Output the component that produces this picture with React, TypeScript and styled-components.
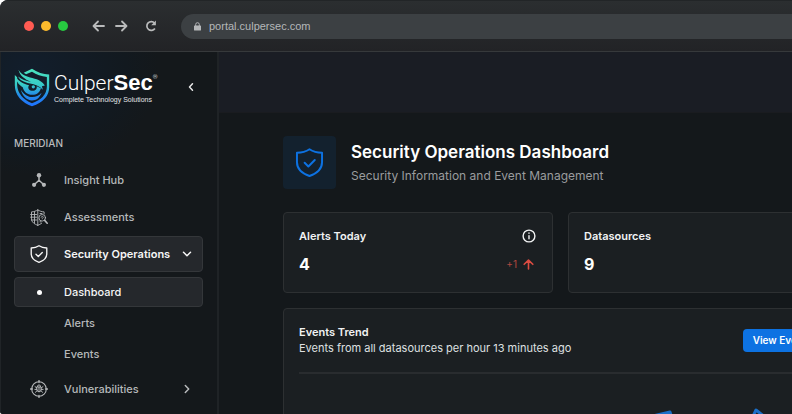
import React from "react";
import styled, { createGlobalStyle } from "styled-components";

const GlobalStyle = createGlobalStyle`
  *, *::before, *::after { box-sizing: border-box; }
  html, body, #root { height: 100%; }
  body {
    margin: 0;
    background: #ffffff;
    font-family: Inter, "Liberation Sans", sans-serif;
    color: #f1f2f3;
    overflow: hidden;
  }
  button { font: inherit; color: inherit; border: 0; background: none; padding: 0; cursor: pointer; }
  h1, h2, p, ul { margin: 0; padding: 0; }
  ul { list-style: none; }
  svg { display: block; flex: none; }
`;

const BrowserWindow = styled.div`
  display: flex;
  flex-direction: column;
  height: 100vh;
  overflow: hidden;
  border-radius: 8px 0 0 3px;
  background: #15191c;
`;

const BrowserBar = styled.header`
  display: flex;
  align-items: center;
  flex: none;
  height: 52px;
  padding-left: 24px;
  background: linear-gradient(#2b2e30, #222326);
  border-top: 1px solid #222527;
  border-bottom: 1px solid #36393b;
`;

const TrafficLights = styled.div`
  display: flex;
  gap: 7px;
  margin-right: 24px;
`;

const Light = styled.span<{ $color: string }>`
  width: 10px;
  height: 10px;
  border-radius: 50%;
  background: ${(p) => p.$color};
`;

const NavButtons = styled.div`
  display: flex;
  gap: 10px;
  margin-right: 17px;
  color: #b9babb;
`;

const IconButton = styled.button`
  display: flex;
`;

const AddressBar = styled.label`
  display: flex;
  align-items: center;
  flex: 1;
  gap: 8px;
  height: 25px;
  margin-left: 7px;
  padding-left: 13px;
  border-radius: 13px 0 0 13px;
  background: #3c4043;
  color: #b5b7b9;
`;

const AddressInput = styled.input`
  flex: 1;
  min-width: 0;
  padding: 0;
  border: 0;
  outline: 0;
  background: transparent;
  color: #b5b7b9;
  font: 11px "Liberation Sans", Arial, sans-serif;
`;

const Page = styled.div`
  display: flex;
  flex: 1;
  min-height: 0;
  border-left: 1px solid #202427;
`;

const Sidebar = styled.aside`
  flex: none;
  width: 218px;
  padding: 15px 14px 0 13px;
  border-right: 2px solid #1f2326;
  background: radial-gradient(ellipse 130px 105px at 28px 18px, #121e2c, #12191f 75%, #14181b 100%);
`;

const SidebarHead = styled.div`
  display: flex;
  align-items: center;
  height: 40px;
  margin-bottom: 28px;
`;

const Brand = styled.div`
  display: flex;
  flex-direction: column;
  flex: 1;
  margin-left: 4px;
  white-space: nowrap;
`;

const BrandName = styled.div`
  font: 300 21px/24px Roboto, "Liberation Sans", sans-serif;
  color: #ffffff;

  b { font: 700 22px/24px "Liberation Sans", Arial, sans-serif; }
  sup { font-size: 6px; line-height: 6px; vertical-align: 11px; }
`;

const Tagline = styled.div`
  font: 7px/9px "Liberation Sans", Arial, sans-serif;
  color: #e3e6e8;
`;

const CollapseButton = styled(IconButton)`
  margin-right: 6px;
  color: #e8e8e8;
`;

const GroupTitle = styled.h2`
  margin-bottom: 11px;
  font-size: 10px;
  line-height: 16px;
  font-weight: 500;
  color: #b9bbbd;
`;

const NavList = styled.ul`
  display: flex;
  flex-direction: column;
  gap: 1px;
`;

const NavItem = styled.button<{ $active?: boolean; $child?: boolean }>`
  display: flex;
  align-items: center;
  width: 100%;
  height: ${(p) => (p.$child ? 30 : 36)}px;
  padding: 0 9px 0 15px;
  border: 1px solid ${(p) => (p.$active ? "#34373a" : "transparent")};
  border-radius: 4px;
  background: ${(p) => (p.$active ? "#25282c" : "transparent")};
  color: ${(p) => (p.$active ? "#f6f6f6" : "#b6b8ba")};
  font-size: 11px;
  font-weight: ${(p) => (p.$active && !p.$child ? 600 : 500)};
  text-align: left;
`;

const NavIcon = styled.span`
  display: flex;
  justify-content: center;
  width: 18px;
  margin-right: 16px;
`;

const NavLabel = styled.span`
  flex: 1;
  white-space: nowrap;
`;

const SubList = styled(NavList)`
  margin: 5px 0 1px;
`;

const Bullet = styled.span`
  width: 5px;
  height: 5px;
  border-radius: 50%;
  background: #ffffff;
`;

const Main = styled.main`
  flex: 1;
  min-width: 0;
  overflow: hidden;
  background: #14181b;
`;

const TopBanner = styled.div`
  height: 61px;
  background: #1a1d24;
  border-bottom: 1px solid #1a1c20;
`;

const Content = styled.div`
  min-width: 683px;
  padding: 23px 64px 0;
`;

const PageHeading = styled.div`
  display: flex;
  align-items: center;
  gap: 15px;
  margin-bottom: 23px;
`;

const HeadingIcon = styled.div`
  display: grid;
  place-items: center;
  width: 53px;
  height: 53px;
  border-radius: 4px;
  background: #13212e;
  color: #0d72e2;
`;

const HeadingText = styled.div`
  padding-top: 3px;
`;

const Title = styled.h1`
  font-size: 17px;
  line-height: 24px;
  font-weight: 600;
  color: #ffffff;
`;

const Subtitle = styled.p`
  font-size: 12px;
  line-height: 24px;
  color: #9a9c9e;
`;

const CardGrid = styled.div`
  display: grid;
  grid-template-columns: 1fr 1fr;
  gap: 15px;
`;

const Card = styled.section`
  padding: 15px;
  border: 1px solid #2d3032;
  border-radius: 4px;
  background: #1b1f22;
`;

const StatCard = styled(Card)`
  height: 81px;
  padding-right: 16px;
`;

const Row = styled.div`
  display: flex;
  align-items: center;
  justify-content: space-between;
`;

const CardTitle = styled.h2`
  font-size: 11px;
  line-height: 16px;
  font-weight: 600;
`;

const StatRow = styled(Row)`
  margin-top: 10px;
`;

const StatValue = styled.span`
  font-size: 16px;
  line-height: 20px;
  font-weight: 700;
  color: #ffffff;
`;

const Delta = styled.span`
  display: flex;
  align-items: center;
  gap: 6px;
  padding-right: 2px;
  font-size: 10px;
  color: #b04840;
`;

const TrendCard = styled(Card)`
  margin-top: 15px;
`;

const TrendText = styled.p`
  font-size: 11px;
  line-height: 16px;
  color: #dfe0e1;
`;

const TrendHead = styled(Row)`
  padding-bottom: 16px;
  border-bottom: 2px solid #292c2f;
`;

const PrimaryButton = styled.button`
  height: 23px;
  padding: 0 10px;
  border-radius: 4px;
  background: #0d72e2;
  color: #ffffff;
  font-size: 10px;
  font-weight: 600;
  white-space: nowrap;
`;

const Chart = styled.svg`
  width: 100%;
  height: 120px;
  margin-top: 32px;
`;

const stroke = {
  fill: "none",
  stroke: "currentColor",
  strokeLinecap: "round" as const,
  strokeLinejoin: "round" as const,
};

const BackIcon = () => (
  <svg width="13" height="14" viewBox="0 0 13 14" {...stroke} strokeWidth="1.8"><path d="M12 7H2M6 2.5 1.5 7 6 11.5" /></svg>
);
const ForwardIcon = () => (
  <svg width="13" height="14" viewBox="0 0 13 14" {...stroke} strokeWidth="1.8"><path d="M1 7h10M7 2.5 11.5 7 7 11.5" /></svg>
);
const ReloadIcon = () => (
  <svg width="12" height="14" viewBox="0 0 12 14" {...stroke} strokeLinecap="butt" strokeWidth="1.7">
    <path d="M9.9 9.5A4.4 4.4 0 1 1 9.6 4.1" />
    <path d="M10.9 1.5v4.7H6.2z" fill="currentColor" stroke="none" />
  </svg>
);
const LockIcon = () => (
  <svg width="7" height="9" viewBox="0 0 7 9">
    <rect y="3.4" width="7" height="5.2" rx=".7" fill="currentColor" />
    <path d="M1.7 4V2.5a1.8 1.8 0 0 1 3.6 0V4" fill="none" stroke="currentColor" strokeWidth="1" />
  </svg>
);
const Chevron = ({ d }: { d: string }) => (
  <svg width="12" height="12" viewBox="0 0 12 12" {...stroke} strokeWidth="1.5"><path d={d} /></svg>
);
const ShieldCheck = ({ size, width }: { size: number; width: number }) => (
  <svg width={size} height={size} viewBox="0 0 28 28" {...stroke} strokeWidth={width}>
    <path d="M14 1.2C10.8 3.3 6.6 4.5 1.9 4.6v9.2c0 6.2 4.4 10.6 12.1 13.2 7.7-2.6 12.1-7 12.1-13.2V4.6C21.4 4.5 17.2 3.3 14 1.2Z" />
    <path d="m9.3 14.3 3.6 3.6 6.2-6.3" />
  </svg>
);
const HubIcon = () => (
  <svg width="14" height="14" viewBox="0 0 14 14" fill="currentColor">
    <circle cx="7" cy="2.2" r="2.2" /><circle cx="2.1" cy="11.8" r="2.1" /><circle cx="11.9" cy="11.8" r="2.1" />
    <path d="M7 2v5.3M7 7.3l-4.6 4.2M7 7.3l4.6 4.2" {...stroke} strokeWidth="1.5" />
  </svg>
);
const AssessIcon = () => (
  <svg width="18" height="17" viewBox="0 0 18 17" {...stroke} strokeWidth=".9">
    <path d="M7.8.8v15.4M7.8 1C5.8 2 4 2.8 1.5 2.9v7c0 3.2 3 5.3 6.3 6.4M7.8 1c2 1 3.8 1.8 6.3 1.9V5M7.8 16.3c1.5-.5 2.8-1.2 3.9-2.1M.6 5.5h6M.6 8.2h6M1.5 11h5.1M4.5 2.8v11.5M10 4.5h2M10 12.8h1" />
    <circle cx="12.2" cy="8.8" r="3.3" />
    <path d="M11.2 8.2c.2-1.2 2-1.1 2 .1 0 .8-1 .7-1 1.6" />
    <path d="m14.7 11.4 2.5 2.8" strokeWidth="1.6" />
  </svg>
);
const BugTargetIcon = () => (
  <svg width="18" height="18" viewBox="0 0 18 18" {...stroke} strokeWidth="1">
    <circle cx="9" cy="9" r="7.3" strokeWidth="1.1" />
    <path d="M9 .5v2M9 15.5v2M.5 9h2M15.5 9h2" strokeWidth="1.3" />
    <path d="M7.4 6.5a1.6 1.6 0 0 1 3.2 0M6.9 7h4.2v2.7a2.1 2.1 0 0 1-4.2 0ZM9 7.2v4.5M6.8 8 5 6.6M11.2 8 13 6.6M6.8 9.4H4.9M11.2 9.4h1.9M7.1 10.7l-1.7 1.6M10.9 10.7l1.7 1.6" />
  </svg>
);
const InfoIcon = () => (
  <svg width="14" height="14" viewBox="0 0 14 14" {...stroke} strokeWidth="1.4">
    <circle cx="7" cy="7" r="5.9" /><path d="M7 6.6v3.1M7 4v.2" />
  </svg>
);
const UpIcon = () => (
  <svg width="11" height="11" viewBox="0 0 11 11" fill="none" stroke="#dc4c42" strokeWidth="1.6" strokeLinejoin="round" strokeLinecap="round">
    <path d="M5.5 10V1.3M1.2 5.3l4.3-4.2 4.3 4.2" />
  </svg>
);
const BrandMark = () => (
  <svg width="36" height="39" viewBox="41 198 108 118">
    <defs>
      <linearGradient id="mark" gradientUnits="userSpaceOnUse" x1="95" y1="202" x2="95" y2="312">
        <stop offset="0" stopColor="#4be3bd" />
        <stop offset=".42" stopColor="#37cbc7" />
        <stop offset=".7" stopColor="#248de8" />
        <stop offset="1" stopColor="#1e72ff" />
      </linearGradient>
    </defs>
    <g fill="url(#mark)">
      <path d="M70 212 95 200q24 16 52 18v38q0 39-52 58-51-20-52-64V219l7 7v23q2 38 45 56 44-16 45-50v-30q-25-3-45-16l-18 8Z" />
      <path d="M54 203c9 15 23 21 42 25 20 5 31 11 38 23l-9 2 3 11c-11-12-24-16-39-19-20-4-31-10-36-21 11 9 23 13 39 16-20-9-34-19-38-37Z" />
      <path d="M45 222c9 18 25 23 41 28-6 9 1 17 11 17 9 0 14-7 12-14l13 6c-4 14-13 20-26 20-16 0-26-10-29-23-13-8-20-18-22-34Z" />
      <path d="M61 264c10 16 22 22 35 22 11 0 20-4 28-13-7 17-16 23-29 23-16 0-28-12-34-32Z" />
      <circle cx="99" cy="255" r="5" />
    </g>
  </svg>
);

const topItems = [
  { label: "Insight Hub", icon: <HubIcon /> },
  { label: "Assessments", icon: <AssessIcon /> },
];
const subItems = ["Dashboard", "Alerts", "Events"];

export default function App() {
  return (
    <>
      <GlobalStyle />
      <BrowserWindow>
        <BrowserBar>
          <TrafficLights>
            <Light $color="#ff5b52" />
            <Light $color="#fdbb2d" />
            <Light $color="#27c840" />
          </TrafficLights>
          <NavButtons>
            <IconButton aria-label="Back"><BackIcon /></IconButton>
            <IconButton aria-label="Forward"><ForwardIcon /></IconButton>
          </NavButtons>
          <NavButtons>
            <IconButton aria-label="Reload"><ReloadIcon /></IconButton>
          </NavButtons>
          <AddressBar>
            <LockIcon />
            <AddressInput aria-label="Address" defaultValue="portal.culpersec.com" />
          </AddressBar>
        </BrowserBar>
        <Page>
          <Sidebar>
            <SidebarHead>
              <BrandMark />
              <Brand>
                <BrandName>Culper<b>Sec</b><sup>®</sup></BrandName>
                <Tagline>Complete Technology Solutions</Tagline>
              </Brand>
              <CollapseButton aria-label="Collapse menu"><Chevron d="M7.5 2.8 4.5 6l3 3.2" /></CollapseButton>
            </SidebarHead>
            <GroupTitle>MERIDIAN</GroupTitle>
            <nav>
              <NavList>
                {topItems.map((item) => (
                  <li key={item.label}>
                    <NavItem><NavIcon>{item.icon}</NavIcon><NavLabel>{item.label}</NavLabel></NavItem>
                  </li>
                ))}
                <li>
                  <NavItem $active aria-expanded="true">
                    <NavIcon><ShieldCheck size={18} width={2.1} /></NavIcon>
                    <NavLabel>Security Operations</NavLabel>
                    <Chevron d="M2.5 4.3 6 7.7l3.5-3.4" />
                  </NavItem>
                  <SubList>
                    {subItems.map((label, i) => (
                      <li key={label}>
                        <NavItem $child $active={i === 0}>
                          <NavIcon>{i === 0 && <Bullet />}</NavIcon>
                          <NavLabel>{label}</NavLabel>
                        </NavItem>
                      </li>
                    ))}
                  </SubList>
                </li>
                <li>
                  <NavItem aria-expanded="false">
                    <NavIcon><BugTargetIcon /></NavIcon>
                    <NavLabel>Vulnerabilities</NavLabel>
                    <Chevron d="M4.3 2.5 7.7 6 4.3 9.5" />
                  </NavItem>
                </li>
              </NavList>
            </nav>
          </Sidebar>
          <Main>
            <TopBanner />
            <Content>
              <PageHeading>
                <HeadingIcon><ShieldCheck size={29} width={1.9} /></HeadingIcon>
                <HeadingText>
                  <Title>Security Operations Dashboard</Title>
                  <Subtitle>Security Information and Event Management</Subtitle>
                </HeadingText>
              </PageHeading>
              <CardGrid>
                <StatCard>
                  <Row><CardTitle>Alerts Today</CardTitle><IconButton aria-label="About alerts today"><InfoIcon /></IconButton></Row>
                  <StatRow><StatValue>4</StatValue><Delta>+1 <UpIcon /></Delta></StatRow>
                </StatCard>
                <StatCard>
                  <Row><CardTitle>Datasources</CardTitle></Row>
                  <StatRow><StatValue>9</StatValue></StatRow>
                </StatCard>
              </CardGrid>
              <TrendCard>
                <TrendHead>
                  <div>
                    <CardTitle>Events Trend</CardTitle>
                    <TrendText>Events from all datasources per hour 13 minutes ago</TrendText>
                  </div>
                  <PrimaryButton>View Events</PrimaryButton>
                </TrendHead>
                <Chart viewBox="0 0 523 120" preserveAspectRatio="xMinYMin meet">
                  <path d="M300 80 345 12 371 6 392 72 430 60 457 4 490 30 523 52" fill="none" stroke="#1a6fc9" strokeWidth="3" strokeLinejoin="round" />
                </Chart>
              </TrendCard>
            </Content>
          </Main>
        </Page>
      </BrowserWindow>
    </>
  );
}
